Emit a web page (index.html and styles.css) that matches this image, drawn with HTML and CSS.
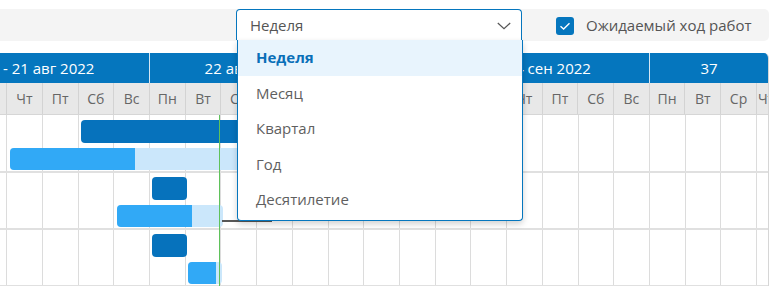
FILE: index.html
```html
<!DOCTYPE html>
<html lang="ru">
<head>
    <meta charset="UTF-8">
    <title>Диаграмма Ганта</title>
    <link rel="stylesheet" href="styles.css">
</head>
<body>
    <div class="toolbar">
        <div class="select">
            <div class="select-value">
                <span>Неделя</span>
                <svg class="chevron" width="14" height="8" viewBox="0 0 14 8"><polyline points="0.8,1 7,6.8 13.2,1" fill="none" stroke="#555" stroke-width="1.2"/></svg>
            </div>
            <ul class="select-list">
                <li class="selected">Неделя</li>
                <li>Месяц</li>
                <li>Квартал</li>
                <li>Год</li>
                <li>Десятилетие</li>
            </ul>
        </div>
        <label class="check">
            <span class="check-box">
                <svg width="18" height="18" viewBox="0 0 18 18"><polyline points="4.5,9.2 7.6,12 13.5,6.2" fill="none" stroke="#fff" stroke-width="1.4"/></svg>
            </span>
            <span>Ожидаемый ход работ</span>
        </label>
    </div>

    <div class="gantt">
        <div class="timeline">
            <div class="weeks">
                <div class="week">15 авг - 21 авг 2022</div>
                <div class="week">22 авг - 28 авг 2022</div>
                <div class="week">29 авг - 4 сен 2022</div>
                <div class="week last">37</div>
            </div>
            <div class="days">
                <div class="day">Пн</div><div class="day">Вт</div><div class="day">Ср</div><div class="day">Чт</div><div class="day">Пт</div><div class="day">Сб</div><div class="day">Вс</div>
                <div class="day">Пн</div><div class="day">Вт</div><div class="day">Ср</div><div class="day">Чт</div><div class="day">Пт</div><div class="day">Сб</div><div class="day">Вс</div>
                <div class="day">Пн</div><div class="day">Вт</div><div class="day">Ср</div><div class="day">Чт</div><div class="day">Пт</div><div class="day">Сб</div><div class="day">Вс</div>
                <div class="day">Пн</div><div class="day">Вт</div><div class="day">Ср</div><div class="day narrow">Чт</div>
            </div>
            <div class="rows">
                <div class="row">
                    <div class="bar plan" style="left: 181px; width: 218px;"></div>
                    <div class="bar fact" style="left: 110px; width: 250px;"><div class="progress" style="width: 125px;"></div></div>
                </div>
                <div class="row">
                    <div class="bar plan" style="left: 252px; width: 35px;"></div>
                    <div class="bar fact" style="left: 217px; width: 106px;"><div class="progress" style="width: 75px;"></div></div>
                    <div class="link" style="left: 322px; width: 50px;"></div>
                </div>
                <div class="row">
                    <div class="bar plan" style="left: 252px; width: 35px;"></div>
                    <div class="bar fact" style="left: 288px; width: 34px;"><div class="progress" style="width: 28px;"></div></div>
                </div>
                <div class="today" style="left: 319px;"></div>
            </div>
        </div>
    </div>
</body>
</html>
```

FILE: styles.css
```css
body {
    margin: 0;
    background: #fff;
    font-family: 'Open Sans', sans-serif;
    color: #555;
}

.toolbar {
    display: flex;
    align-items: flex-start;
    width: 769px;
    height: 32px;
    margin-top: 9px;
    background: #f4f4f4;
    border-radius: 0 5px 5px 0;
}

.select {
    position: relative;
    width: 284px;
    margin-left: 236px;
    border: 1px solid #0576be;
    border-bottom: none;
    border-radius: 4px 4px 0 0;
    background: #fff;
    z-index: 5;
}
.select-value {
    display: flex;
    align-items: center;
    justify-content: space-between;
    height: 30px;
    padding: 0 10px 0 13px;
    font-size: 15px;
}
.chevron {
    margin-top: 1px;
}
.select-list {
    position: absolute;
    top: 30px;
    left: 0;
    width: 284px;
    margin: 0;
    padding: 0 0 2px;
    list-style: none;
    background: #fff;
    border: 1px solid #0576be;
    border-top: none;
    border-radius: 0 0 4px 4px;
    box-shadow: 0 3px 6px rgba(0, 0, 0, 0.18);
}
.select-list li {
    height: 35.5px;
    line-height: 35.5px;
    padding-left: 18px;
    font-size: 15px;
    color: #5f5f5f;
}
.select-list li.selected {
    background: #e8f4fd;
    color: #0a6fb8;
    font-weight: bold;
}

.check {
    display: flex;
    align-items: center;
    gap: 12px;
    height: 32px;
    margin-left: 34px;
    font-size: 15px;
    color: #555;
}
.check-box {
    display: block;
    width: 18px;
    height: 18px;
    margin-top: 1px;
    background: #0576be;
    border-radius: 3px;
}
.check-box svg {
    display: block;
}

.gantt {
    width: 768px;
    margin-top: 12px;
    overflow: hidden;
    border-right: 1px solid #d6d6d6;
    border-radius: 0 5px 0 0;
}
.timeline {
    width: 868px;
    margin-left: -100px;
}
.weeks {
    display: flex;
    height: 30px;
    background: #0576be;
}
.week {
    flex: 0 0 250px;
    box-sizing: border-box;
    border-right: 1px solid #d5e6f3;
    color: #fff;
    font-size: 15px;
    line-height: 30px;
    text-align: center;
    white-space: nowrap;
}
.week.last {
    flex: 1;
    border-right: none;
}
.days {
    display: flex;
    height: 31px;
    background: #e8e8e8;
    border-bottom: 1px solid #d6d6d6;
}
.day {
    flex: 0 0 35.714px;
    box-sizing: border-box;
    border-right: 1px solid #d3d3d3;
    font-size: 14px;
    line-height: 31px;
    text-align: center;
    color: #666;
}
.day.narrow {
    flex-basis: 22px;
    text-align: left;
    padding-left: 1px;
}
.rows {
    position: relative;
    background: repeating-linear-gradient(to right, transparent 0 34.714px, #dcdcdc 34.714px 35.714px);
}
.row {
    position: relative;
    height: 56px;
    border-bottom: 2px solid #e0e0e0;
    margin-bottom: -1px;
}
.row:last-of-type {
    margin-bottom: 0;
}
.bar {
    position: absolute;
    height: 22px;
    border-radius: 4px;
    overflow: hidden;
}
.plan {
    top: 5px;
    height: 23px;
    background: #0672bc;
}
.fact {
    top: 33px;
    background: #cbe7fb;
}
.progress {
    height: 100%;
    background: #31a9f6;
}
.link {
    position: absolute;
    top: 48px;
    height: 2px;
    background: #585858;
}
.today {
    position: absolute;
    top: 0;
    bottom: 0;
    width: 1px;
    background: #5fc25a;
    z-index: 2;
}
```
